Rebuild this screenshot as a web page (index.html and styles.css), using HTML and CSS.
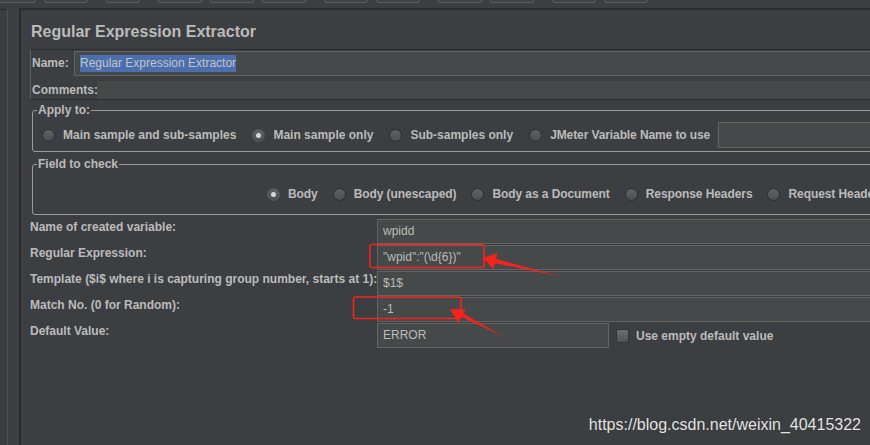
FILE: index.html
```html
<!DOCTYPE html>
<html lang="en">
<head>
    <meta charset="UTF-8">
    <meta name="viewport" content="width=device-width, initial-scale=1.0">
    <title>Regular Expression Extractor</title>
    <link rel="stylesheet" href="styles.css">
</head>
<body>
    <div class="toolbar">
        <span class="tab first"></span>
        <span class="tab"></span>
        <span class="tab far narrow"></span>
        <span class="tab far"></span>
        <span class="tab"></span>
        <span class="tab"></span>
        <span class="tab far"></span>
        <span class="tab"></span>
        <span class="tab far"></span>
        <span class="tab"></span>
        <span class="tab far"></span>
        <span class="tab"></span>
    </div>

    <div class="main">
        <div class="rail"></div>
        <div class="gutter"></div>

        <div class="panel">
            <h1 class="title">Regular Expression Extractor</h1>

            <div class="name-box">
                <div class="name-row">
                    <label class="name-label">Name:</label>
                    <div class="text-field"><span class="selected">Regular Expression Extractor</span></div>
                </div>
                <div class="comment-row">
                    <label class="comment-label">Comments:</label>
                    <div class="comment-field"></div>
                </div>
            </div>

            <fieldset class="group">
                <legend>Apply to:</legend>
                <div class="radio-row apply">
                    <span class="radio"></span><span class="opt">Main sample and sub-samples</span>
                    <span class="radio on"></span><span class="opt">Main sample only</span>
                    <span class="radio"></span><span class="opt">Sub-samples only</span>
                    <span class="radio"></span><span class="opt var-label">JMeter Variable Name to use</span>
                    <div class="var-field"></div>
                </div>
            </fieldset>

            <fieldset class="group check">
                <legend>Field to check</legend>
                <div class="radio-row fields">
                    <span class="radio on"></span><span class="opt">Body</span>
                    <span class="radio"></span><span class="opt">Body (unescaped)</span>
                    <span class="radio"></span><span class="opt">Body as a Document</span>
                    <span class="radio"></span><span class="opt">Response Headers</span>
                    <span class="radio"></span><span class="opt">Request Headers</span>
                </div>
            </fieldset>

            <div class="form">
                <label>Name of created variable:</label>
                <div class="field">wpidd</div>

                <label>Regular Expression:</label>
                <div class="field">"wpid":"(\d{6})"</div>

                <label>Template ($i$ where i is capturing group number, starts at 1):</label>
                <div class="field">$1$</div>

                <label>Match No. (0 for Random):</label>
                <div class="field">-1</div>

                <label>Default Value:</label>
                <div class="default-row">
                    <div class="field short">ERROR</div>
                    <span class="checkbox"></span>
                    <span class="opt">Use empty default value</span>
                </div>
            </div>
        </div>
    </div>

    <!-- red marks drawn over the screenshot -->
    <svg class="marks" width="870" height="445" viewBox="0 0 870 445">
        <rect x="370" y="244.5" width="114" height="23" rx="2" fill="none" stroke="#f4231b" stroke-width="1.6"/>
        <rect x="353.5" y="297" width="107.5" height="21.5" rx="2" fill="none" stroke="#f4231b" stroke-width="1.6"/>
        <polygon points="483,258 497.5,253 496.1,259 561,276.5 495.1,263.2 493.7,269.5" fill="#f4231b"/>
        <polygon points="450,309 466,309.5 463.4,313.5 503,336.5 461.6,317.1 458.5,323" fill="#f4231b"/>
    </svg>

    <div class="watermark">https://blog.csdn.net/weixin_40415322</div>
</body>
</html>
```

FILE: styles.css
```css
* {
    margin: 0;
    padding: 0;
    box-sizing: border-box;
}
body {
    width: 870px;
    height: 445px;
    overflow: hidden;
    position: relative;
    background: #3c3f41;
    color: #bbbbbb;
    font-family: "Liberation Sans", Arial, sans-serif;
    font-size: 12px;
}
.toolbar {
    display: flex;
    height: 8px;
    overflow: hidden;
}
.tab {
    flex: none;
    width: 44px;
    height: 3px;
    margin-left: 8px;
    border: 1px solid #5b5e60;
    border-top: 0;
    border-radius: 0 0 4px 4px;
    background: #404345;
}
.tab.first {
    width: 36px;
    margin-left: 0;
    border-left: 0;
    border-radius: 0 0 4px 0;
}
.tab.far {
    margin-left: 18px;
}
.tab.narrow {
    width: 34px;
}
.main {
    display: flex;
    height: 437px;
}
.rail {
    flex: none;
    width: 8px;
    margin-top: 1px;
    border-top: 1px solid #2b2b2b;
    border-right: 1px solid #505355;
}
.gutter {
    flex: none;
    width: 11px;
}
.panel {
    flex: 1;
    min-width: 0;
    overflow: hidden;
    border-left: 2px solid #2b2b2b;
    border-top: 2px solid #2b2b2b;
    padding-left: 9px;
}
.title {
    margin: 12px 0 0 1px;
    font-size: 16px;
    line-height: 20px;
    font-weight: bold;
}
label,
.opt,
legend {
    font-weight: bold;
    white-space: nowrap;
}

/* name & comments */
.name-box {
    margin: 7px -10px 0 0;
    border-top: 1px solid #2b2b2b;
    border-bottom: 1px solid #2b2b2b;
    border-left: 1px solid #5e6162;
}
.name-row {
    display: flex;
    align-items: center;
    height: 26px;
}
.name-label {
    flex: none;
    width: 43px;
    padding-left: 1px;
}
.text-field {
    flex: 1;
    height: 25px;
    margin-top: 1px;
    padding: 3px 5px 0;
    border: 1px solid #646464;
    background: #45494a;
}
.selected {
    display: inline-block;
    line-height: 17px;
    background: #4b6eaf;
    color: #c4c4c4;
}
.comment-row {
    display: flex;
    align-items: center;
    height: 18px;
    margin-top: 5px;
}
.comment-label {
    flex: none;
    width: 66px;
    padding-left: 1px;
}
.comment-field {
    flex: 1;
    height: 18px;
    background: #45494a;
}

/* titled groups */
.group {
    min-width: 0;
    margin: 3px -12px 0 2px;
    padding: 0;
    border: 1px solid #9a9a9a;
    border-radius: 3px;
}
.group.check {
    margin-top: 5px;
}
.group legend {
    margin-left: 4px;
    padding: 0 1px;
    line-height: 14px;
}
.radio-row {
    display: flex;
    align-items: center;
    height: 26px;
}
.radio-row.apply {
    box-sizing: content-box;
    padding: 5px 0 3px 9px;
}
.radio-row.fields {
    box-sizing: content-box;
    padding: 10px 0 7px 234px;
}
.fields .opt {
    letter-spacing: -0.08px;
}
.radio {
    flex: none;
    position: relative;
    width: 13px;
    height: 13px;
    margin-right: 8px;
    border-radius: 50%;
    border: 1px solid #2a2c2e;
    background: linear-gradient(#5e6265, #4d5053);
}
.radio.on {
    border-color: #55595b;
}
.radio.on::after {
    content: "";
    position: absolute;
    left: 3px;
    top: 3px;
    width: 5px;
    height: 5px;
    border-radius: 50%;
    background: #d6d6d6;
}
.radio-row .opt {
    flex: none;
    margin-right: 16px;
}
.fields .opt {
    margin-right: 15px;
}
.apply .var-label {
    margin-right: 8px;
    letter-spacing: -0.1px;
}
.var-field {
    flex: none;
    width: 200px;
    height: 26px;
    border: 1px solid #646464;
    background: #45494a;
}

/* extractor fields */
.form {
    display: grid;
    grid-template-columns: 347px 1fr;
    grid-auto-rows: 25px;
    row-gap: 1px;
    margin: 4px -10px 0 0;
}
.form label {
    padding-top: 1px;
    line-height: 14px;
}
.field {
    height: 25px;
    padding-left: 5px;
    line-height: 23px;
    border: 1px solid #646464;
    background: #45494a;
    white-space: nowrap;
}
.field.short {
    flex: none;
    width: 232px;
}
.default-row {
    display: flex;
    align-items: center;
}
.checkbox {
    flex: none;
    width: 13px;
    height: 14px;
    margin: 0 7px;
    border-radius: 2px;
    border: 1px solid #303234;
    background: linear-gradient(#696d70, #505355);
}

/* overlays */
.marks {
    position: absolute;
    left: 0;
    top: 0;
    pointer-events: none;
}
.watermark {
    position: absolute;
    right: 9px;
    top: 416px;
    font-size: 16px;
    line-height: 18px;
    color: #e4e4e4;
    text-shadow: 0 0 1px #2a2a2a;
}
```
